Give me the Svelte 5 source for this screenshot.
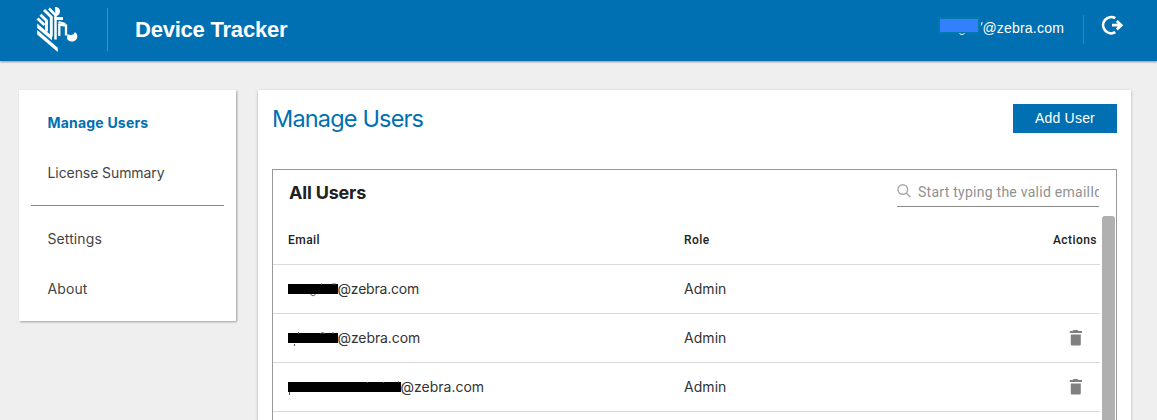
<script>
  const groups = [['Manage Users', 'License Summary'], ['Settings', 'About']];
  const rows = [
    { bar: 50, tight: -0.2, drop: 0, marks: 'M22.500 14.500q3 2.500 5 0M33 4h1M44 4h4', removable: false },
    { bar: 50, tight: -0.1, drop: 1, marks: 'M6.500 15v2M10.500 3v2M32 4.500q2.500 -1.500 5 0M44 4h2', removable: true },
    { bar: 113, tight: 0, drop: 0, marks: 'M1.500 14v3M79.500 4v1M95.500 4v1M110 4h1', removable: true }
  ];
</script>

<div class="page">
  <header>
    <svg class="logo" width="44" height="48" viewBox="0 0 44 48" fill="none" stroke="#fff" stroke-width="2.900">
      <path d="M2.200 25L22.800 42.800V47L2.200 29.500Z" fill="#fff" stroke="none" />
      <path d="M2.200 18.600L17 31V35.300L2.200 22.900Z" fill="#fff" stroke="none" />
      <path d="M2.500 13.500L9.500 20M5.500 9.700L11.500 15.500V26.500" />
      <path d="M9 5L16.300 12V31.500" />
      <path d="M14 3.500L20.500 10V34.500" stroke-width="2.500" />
      <path d="M19.500 13.500H28" stroke-width="3" />
      <path d="M20 2c3.500 0 5 2 5 4.500S23 11 20.500 11.500Z" fill="#fff" stroke="none" />
      <path d="M24.300 31V19.500L31 20.500V30.500" stroke-width="2.300" />
      <path d="M23.500 17l7 2" stroke-width="2" />
      <path d="M32.500 29c2 1.500 6.500 1.500 7.500-2c3 2 3.500 7-.5 9c-4 1.500-7-.5-7.500-2.500Z" fill="#fff" stroke="none" />
    </svg>
    <i class="rule"></i>
    <h1>Device Tracker</h1>
    <div class="account">
      <span class="mask"></span>
      <svg class="mark" width="4" height="19" viewBox="0 0 4 19" fill="none" stroke="#fff"><path d="M3.200 4l-1 3.500" /></svg>
      <span class="mail">@zebra.com</span>
      <svg class="tail" width="6" height="3" viewBox="0 0 6 3" fill="none" stroke="#fff"><path d="M.5 .5q2.500 2.500 5 0" /></svg>
    </div>
    <i class="rule small"></i>
    <svg class="exit" width="24" height="22" viewBox="0 0 24 22" fill="none" stroke="#fff" stroke-width="2.700">
      <path d="M15.300 4.200A8.100 8.100 0 1 0 15.300 18.200" />
      <path d="M12 11.200h8M16.800 6.900l4.500 4.300l-4.500 4.300" />
    </svg>
  </header>
  <div class="body">
    <nav>
      {#each groups as group, g}
        <div class="group">
          {#each group as item, i}
            <span class="item" class:active={g === 0 && i === 0} class:short={g === 1}>{item}</span>
          {/each}
        </div>
      {/each}
    </nav>
    <main>
      <div class="heading"><h2>Manage Users</h2><button>Add User</button></div>
      <section>
        <div class="tools">
          <h3>All Users</h3>
          <div class="search">
            <svg width="15" height="15" viewBox="0 0 15 15" fill="none" stroke="#a9a9a9" stroke-width="1.400"><circle cx="5.800" cy="5.500" r="4.800" /><path d="M9.300 9l4.200 4.200" /></svg>
            <span>Start typing the valid emailId</span>
          </div>
        </div>
        <div class="scroller">
          <div class="table">
            <div class="row head"><b>Email</b><b>Role</b><b class="last">Actions</b></div>
            {#each rows as r}
              <div class="row">
                <span class="email">
                  <span class="redacted" style="width:{r.bar}px;margin-top:{r.drop - 1}px"></span>
                  <svg class="bits" width="113" height="19" viewBox="0 0 113 19" fill="none" stroke="#555"><path d={r.marks} /></svg>
                  <span class="domain" style="letter-spacing:{r.tight}px">@zebra.com</span>
                </span>
                <span class="role">Admin</span>
                <span class="last">
                  {#if r.removable}
                    <svg class="bin" width="14" height="18" viewBox="0 0 14 18" fill="#808080"><path d="M4.500 1h4l1 1H13v2H.8V2h2.700ZM1.800 5.500h10V15q0 1.500-1 1.500h-8Q1.800 16.500 1.800 15Z" /></svg>
                  {/if}
                </span>
              </div>
            {/each}
          </div>
          <div class="thumb"></div>
        </div>
      </section>
    </main>
  </div>
</div>

<style>
  :global(body) { margin: 0; overflow: hidden; }
  * { box-sizing: border-box; }
  h1, h2, h3 { margin: 0; }
  .page { width: 1157px; height: 420px; overflow: hidden; background: #efefef; font-family: Inter, sans-serif; display: flex; flex-direction: column; }
  header { height: 61px; flex: none; background: #0070b2; color: #fff; display: flex; align-items: flex-start; box-shadow: 0 1px 2px #0006; }
  .logo { margin: 5px 0 0 35px; flex: none; }
  .rule { width: 1px; height: 43px; margin: 8px 0 0 28px; background: #3d93c5; }
  h1 { font: 700 22px/26px "Liberation Sans", sans-serif; letter-spacing: -.22px; margin: 17px 0 0 27px; white-space: nowrap; }
  .account { margin: 18px 0 0 auto; position: relative; display: flex; height: 20px; }
  .mask { width: 42px; height: 17px; margin-top: -1px; background: #3380ff; border: 2px solid #007aac; }
  .mark { margin-left: -1px; }
  .tail { position: absolute; left: 21px; top: 15px; }
  .mail { font: 14px/20px "Liberation Sans", sans-serif; letter-spacing: .2px; margin-left: -1px; }
  .rule.small { height: 29px; margin: 15px 0 0 19px; background: #248ac3; }
  .exit { margin: 14px 33px 0 16px; }
  .body { display: flex; gap: 22px; padding: 29px 26px 0 19px; }
  nav { width: 217px; height: 231px; background: #fff; padding: 8px 12px 0 12px; box-shadow: 1px 1px 2px #0005; }
  .group + .group { border-top: 1px solid #888; margin-top: 7px; padding-top: 8px; }
  .item { display: block; height: 50px; line-height: 50px; padding-left: 16.500px; color: #444; font-size: 14px; letter-spacing: -.08px; }
  .item.active { color: #0070b2; font-weight: 700; letter-spacing: .2px; }
  .item.short { letter-spacing: .1px; }
  main { flex: 1; height: 360px; background: #fff; padding: 14px 14px 0; box-shadow: 0 1px 3px #0004; }
  .heading { display: flex; justify-content: space-between; height: 65px; }
  h2 { font-size: 23.500px; line-height: 30px; font-weight: 400; color: #0070b2; letter-spacing: -.83px; }
  button { width: 104px; height: 29px; border: 0; padding: 0; background: #0070b2; color: #fff; font: 14px/29px "Liberation Sans", sans-serif; letter-spacing: .2px; }
  section { height: 300px; border: 1px solid #999; }
  .tools { height: 46px; padding: 0 17px 0 16px; display: flex; justify-content: space-between; }
  h3 { font: 700 18px/46px Inter, sans-serif; letter-spacing: -.2px; color: #212121; }
  .search { width: 202px; height: 37px; border-bottom: 1px solid #888; display: flex; overflow: hidden; color: #919191; font: 14px/44px Roboto, sans-serif; letter-spacing: .26px; white-space: nowrap; }
  .search svg { margin: 14px 6px 0 0; flex: none; }
  .scroller { display: flex; gap: 2px; }
  .table { width: 827px; }
  .row { display: grid; grid-template-columns: 396px 1fr 100px; height: 49px; align-items: center; border-bottom: 1px solid #dadada; padding-left: 15px; font-size: 14px; color: #333; }
  .head { font: 500 12px/49px Roboto, sans-serif; letter-spacing: .45px; color: #212121; }
  .head b { font-weight: 500; }
  .last { text-align: right; padding-right: 3px; }
  .email { display: flex; align-items: center; position: relative; height: 19px; }
  .domain, .role { line-height: 17px; margin-bottom: 2px; }
  .domain { margin-left: -.5px; }
  .role { letter-spacing: .05px; }
  .redacted { height: 10px; background: #000; flex: none; }
  .bits { position: absolute; left: 0; top: 0; }
  .bin { display: block; margin: 0 14px 0 auto; }
  .thumb { width: 13px; height: 300px; background: #b0b0b0; border-radius: 3px 3px 0 0; }
</style>
